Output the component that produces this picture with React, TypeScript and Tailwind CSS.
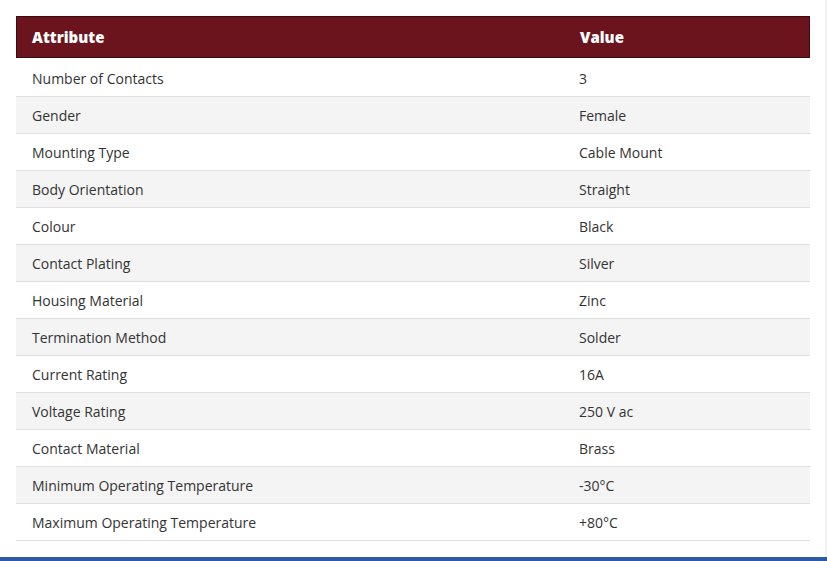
const rows: [string, string][] = [
  ["Number of Contacts", "3"],
  ["Gender", "Female"],
  ["Mounting Type", "Cable Mount"],
  ["Body Orientation", "Straight"],
  ["Colour", "Black"],
  ["Contact Plating", "Silver"],
  ["Housing Material", "Zinc"],
  ["Termination Method", "Solder"],
  ["Current Rating", "16A"],
  ["Voltage Rating", "250 V ac"],
  ["Contact Material", "Brass"],
  ["Minimum Operating Temperature", "-30°C"],
  ["Maximum Operating Temperature", "+80°C"],
];

export default function App() {
  return (
    <div
      className="h-[561px] w-[827px] flex flex-col bg-white overflow-hidden"
      style={{ fontFamily: '"Open Sans", "Noto Sans", sans-serif' }}
    >
      <div className="flex-1 border-r-2 border-[#f1f1f1] pt-4 pl-4 pr-[15px]">
        {/* Spec table */}
        <div className="w-[794px]">
          <div className="grid grid-cols-[547px_1fr] h-[42px] mb-[2px] items-center bg-[#6b141e] border border-[#3c0a10] text-white text-[15px] font-extrabold">
            <div className="pl-[15px]">Attribute</div>
            <div className="pl-4">Value</div>
          </div>
          {rows.map(([attr, value], i) => (
            <div
              key={attr}
              className={
                "grid grid-cols-[547px_1fr] h-[37px] items-center border-b border-[#dedede] text-[14px] text-[#333] " +
                (i % 2 === 1 ? "bg-[#f4f4f4]" : "bg-white")
              }
            >
              <div className="pl-4">{attr}</div>
              <div className="pl-4">{value}</div>
            </div>
          ))}
        </div>
      </div>
      <div className="h-1 bg-[#2c5aa6]" />
    </div>
  );
}
